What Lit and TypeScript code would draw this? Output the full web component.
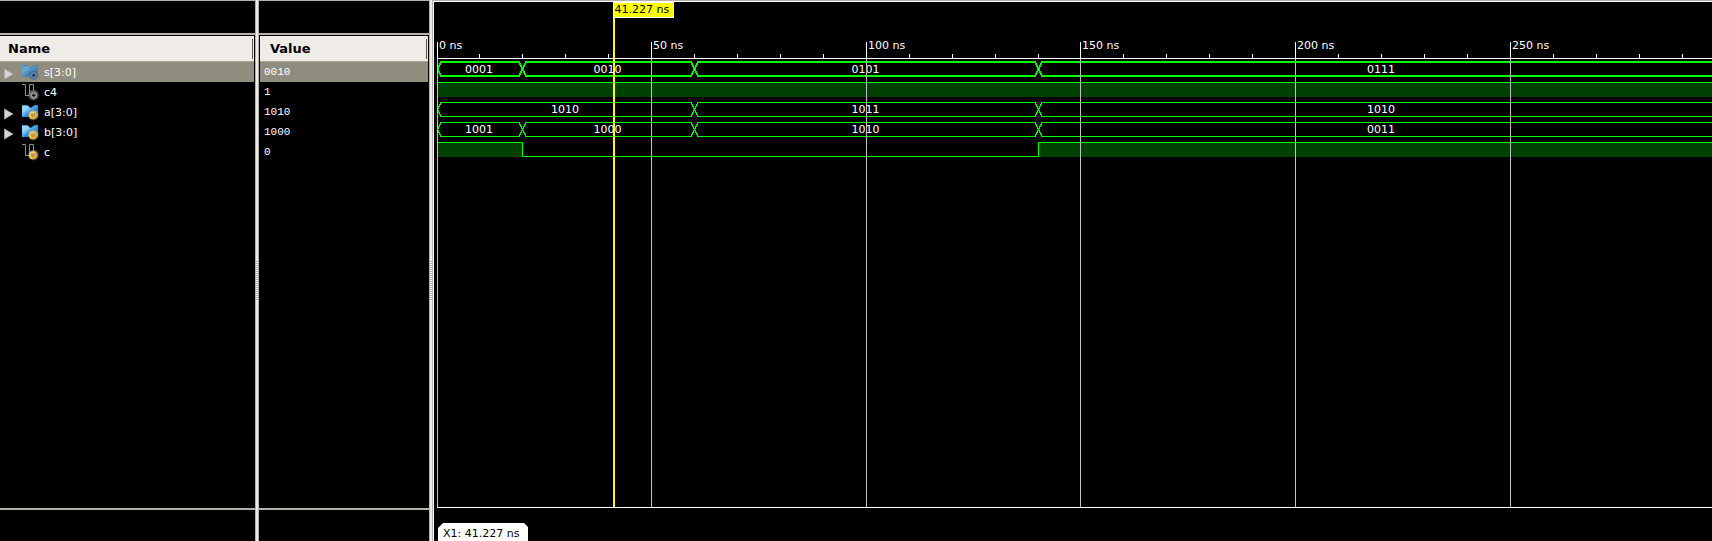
import { LitElement, html, svg, css } from "lit";
import { customElement, property } from "lit/decorators.js";

const SCALE = 4.2929;
const X0 = 3.06;
const px = (t: number) => Math.floor(X0 + t * SCALE);
const WIDTH = 1278;

type Kind = "bus" | "bit";
interface Signal { name: string; value: string; kind: Kind; input: boolean; selected?: boolean; segs: [number, string][]; }

const signals: Signal[] = [
  { name: "s[3:0]", value: "0010", kind: "bus", input: false, selected: true, segs: [[0, "0001"], [20, "0010"], [60, "0101"], [140, "0111"]] },
  { name: "c4", value: "1", kind: "bit", input: false, segs: [[0, "1"]] },
  { name: "a[3:0]", value: "1010", kind: "bus", input: true, segs: [[0, "1010"], [60, "1011"], [140, "1010"]] },
  { name: "b[3:0]", value: "1000", kind: "bus", input: true, segs: [[0, "1001"], [20, "1000"], [60, "1010"], [140, "0011"]] },
  { name: "c", value: "0", kind: "bit", input: true, segs: [[0, "1"], [20, "0"], [140, "1"]] },
];

@customElement("signal-icon")
class SignalIcon extends LitElement {
  @property() kind: Kind = "bus";
  @property({ type: Boolean }) input = false;
  @property({ type: Boolean }) selected = false;
  static styles = css`:host{display:block;width:18px;height:18px}svg{display:block}`;
  render() {
    return html`<svg width="18" height="18" viewBox="0 0 18 18">
      <defs>
        <linearGradient id="blue" x1="0" y1="0" x2="1" y2="1">
          <stop offset="0" stop-color=${this.selected ? "#5f9cc8" : "#a4d8f8"}></stop>
          <stop offset=".3" stop-color=${this.selected ? "#6aa6d0" : "#8fcdf6"}></stop>
          <stop offset=".55" stop-color=${this.selected ? "#4388bd" : "#2f93dc"}></stop>
          <stop offset="1" stop-color=${this.selected ? "#3f7cae" : "#1c7cc8"}></stop>
        </linearGradient>
        <radialGradient id="halo"><stop offset=".6" stop-color="#d0d0d0" stop-opacity=".7"></stop><stop offset="1" stop-color="#888" stop-opacity="0"></stop></radialGradient>
        <linearGradient id="gold" x1="0" y1="0" x2="1" y2="1"><stop offset="0" stop-color="#fff0c0"></stop><stop offset=".5" stop-color="#f8c850"></stop><stop offset="1" stop-color="#eda010"></stop></linearGradient>
      </defs>
      ${this.kind === "bus"
        ? svg`<path d="M0 2.500H5.500L8.800 5.200L12.500 2.500H16V13.500H11L8.500 11.500L6 14H0Z" fill="url(#blue)"></path><path d="M0 2.500H5.500L8.800 5.200L12.500 2.500H16" fill="none" stroke=${this.selected ? "#3b80b6" : "#3c9ce0"} stroke-width=".8"></path>`
        : svg`<path d="M0 1.500H3.500V12.500H7.500V1.500H11.500V9" fill="none" stroke="#6fa75c"></path>`}
      ${this.selected ? "" : svg`<circle cx="11.500" cy="12" r="6" fill="url(#halo)"></circle>`}
      ${this.input
        ? svg`<circle cx="10.800" cy="12.200" r="3.900" fill="url(#gold)" stroke="#d09a2c" stroke-width=".5"></circle><path d="M9.200 10.200V12C9.200 14.200 12.400 14.200 12.400 12V10.200M10.800 10.200V13.200" fill="none" stroke="#8a7340" stroke-width=".8"></path>`
        : svg`<circle cx="11.700" cy="12.300" r="4" fill=${this.selected ? "#6088a8" : "#999"} stroke=${this.selected ? "#3d627f" : "#444"} stroke-width=".9"></circle><path d="M11.700 10.600V14M10 12.300H13.400" stroke=${this.selected ? "#1d3042" : "#111"} stroke-width="1.200"></path>`}
    </svg>`;
  }
}

@customElement("wave-view")
class WaveView extends LitElement {
  static styles = css`
    :host{display:block;height:539px}
    svg{display:block}
    text{font:11px "DejaVu Sans",sans-serif;fill:#fff}
    .dark{fill:#000}
    .line{fill:none;stroke:#0f0}
    .fill{fill:#004000}
  `;
  bus(s: Signal, top: number) {
    const w = s.selected ? 2 : 1;
    const t = s.selected ? top : top + 0.5;
    const b = t + 14;
    const m = t + 7;
    return s.segs.map(([start, label], i) => {
      const a = px(start) + 0.5;
      const last = i === s.segs.length - 1;
      const e = last ? WIDTH + 20 : px(s.segs[i + 1][0]) + 0.5;
      const mid = last ? 948 : (a + e) / 2;
      const d = `M${e} ${m}L${e - 3.5} ${t}H${a + 3.5}L${a} ${m}L${a + 3.5} ${b}H${e - 3.5}Z`;
      return svg`<path class="line" stroke-width=${w} shape-rendering="crispEdges" d=${d}></path>
        <text x=${mid - 15} y=${top + 11}>${label}</text>`;
    });
  }
  bit(s: Signal, top: number) {
    let d = "";
    const fills = s.segs.map(([start, v], i) => {
      const a = px(start);
      const e = i === s.segs.length - 1 ? WIDTH : px(s.segs[i + 1][0]);
      const y = top + (v === "1" ? 0.5 : 14.5);
      d += `${i ? "L" : "M"}${a + 0.5} ${y}H${e + 0.5}`;
      return v === "1" ? svg`<rect class="fill" x=${a} y=${top} width=${e - a} height="15"></rect>` : "";
    });
    return svg`${fills}<path class="line" d=${d}></path>`;
  }
  render() {
    const ticks = Array.from({ length: 30 }, (_, i) => i * 10);
    const tops = [60, 80, 100, 120, 140];
    const major = ticks.filter((t) => t % 50 === 0);
    return html`<svg width=${WIDTH} height="539" viewBox="0 0 1278 539">
      <path d="M3 56.500H1278M3 505.500H1278" stroke="#fff"></path>
      ${ticks.map((t) => svg`<path d=${`M${px(t) + 0.5} ${t % 50 ? 52 : 40}V57`} stroke="#fff"></path>`)}
      ${major.map((t) => svg`<text x=${px(t) + 2} y="47">${t} ns</text>`)}
      ${signals.map((s, i) => (s.kind === "bus" ? this.bus(s, tops[i]) : this.bit(s, tops[i])))}
      ${major.map((t) => svg`<path d=${`M${px(t) + 0.5} 57V505`} stroke="#c0c0c0"></path>`)}
      <rect x="179" y="16" width="2" height="489" fill="#ff0"></rect>
      <rect x="179.500" y=".5" width="60" height="15" fill="#ff0" stroke="#fff"></rect>
      <text class="dark" x="180.500" y="11">41.227 ns</text>
      <path d="M4 539V526L7 523L9 521H90L94 525V539Z" fill="#fff"></path>
      <text class="dark" x="9" y="535">X1: 41.227 ns</text>
    </svg>`;
  }
}

@customElement("app-root")
class AppRoot extends LitElement {
  static styles = css`
    :host{display:grid;grid-template-columns:255px 4px 170px 4px 1fr;height:541px;overflow:hidden;background:#000;color:#fff;font:11px "DejaVu Sans",sans-serif}
    .pane{display:grid;grid-template-rows:32px 2px 1fr 2px 31px;border-top:1px solid #b5b0a9}
    .rule{background:#b5b0a9}
    .list{padding:1px 1px 0 0}
    .values .list{padding-left:1px}
    .head{box-sizing:border-box;height:26px;background:#efebe7;border-bottom:1px solid #aaa596;color:#000;font:bold 13px/25px "DejaVu Sans",sans-serif;padding-left:8px;display:flex;justify-content:space-between}
    .head i{width:1px;height:20px;margin:3px 1px 0 0;background:#555}
    .values .head{padding-left:10px}
    .row{height:20px;display:flex;align-items:center}
    .selected{background:#918d7e}
    .arrow{display:block;width:10px;height:12px;margin:3px 8px 0 4px}
    .row signal-icon{margin-right:4px}
    .values .row{font-family:"Liberation Mono",monospace;padding-left:4px}
    .split{box-sizing:border-box;background:#efebe7;border:solid #b5b0a9;border-width:0 1px;display:flex;align-items:flex-start}
    .split i{width:2px;height:39px;margin-top:261px;background:repeating-linear-gradient(#b5b0a9 0 1px,#fff 1px 2px)}
    .waves{border-top:1px solid #b5b0a9;overflow:hidden}
    .inner{border-top:1px solid #fff;border-left:1px solid #fff}
  `;
  render() {
    return html`
      <div class="pane"><span></span><span class="rule"></span>
        <div class="list"><div class="head">Name<i></i></div>
          ${signals.map((s) => html`<div class="row ${s.selected ? "selected" : ""}">
            <svg class="arrow" viewBox="0 0 10 12">${s.kind === "bus" ? svg`<path d="M.5 1L9 6L.5 11Z" fill="#d8d6d2" stroke="#aaa" stroke-width=".7"></path>` : ""}</svg>
            <signal-icon .kind=${s.kind} .input=${s.input} .selected=${!!s.selected}></signal-icon>
            <span>${s.name}</span></div>`)}
        </div><span class="rule"></span></div>
      <div class="split"><i></i></div>
      <div class="pane values"><span></span><span class="rule"></span>
        <div class="list"><div class="head">Value<i></i></div>
          ${signals.map((s) => html`<div class="row ${s.selected ? "selected" : ""}">${s.value}</div>`)}
        </div><span class="rule"></span></div>
      <div class="split"><i></i></div>
      <div class="waves"><div class="inner"><wave-view></wave-view></div></div>`;
  }
}
